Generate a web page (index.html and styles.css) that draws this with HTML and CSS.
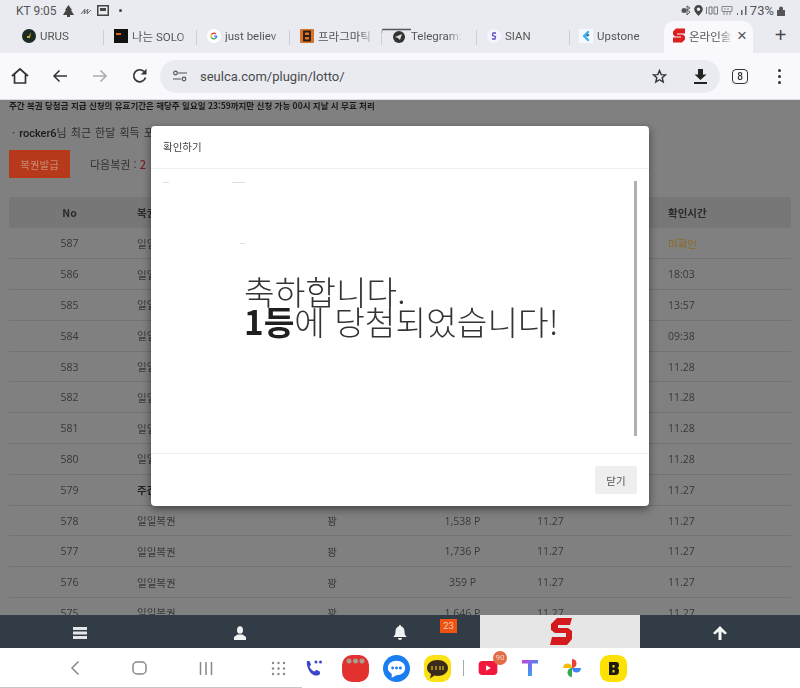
FILE: index.html
```html
<!DOCTYPE html>
<html lang="ko">
<head>
<meta charset="utf-8">
<title>온라인 복권</title>
<link rel="stylesheet" href="styles.css">
</head>
<body>
<div class="screen">
  <header class="chrome">
    <div class="status">
      <div class="status-left">
        <span>KT 9:05</span>
        <svg width="13" height="12" viewBox="0 0 13 12"><path d="M6.500 0 10 5H9l3 5H8v2H5v-2H1l3-5H3z" fill="#444"/></svg>
        <svg width="12" height="10" viewBox="0 0 12 10"><path d="M1 8 5 3 4 8l4-5-1 5 4-4" fill="none" stroke="#666" stroke-width="1"/></svg>
        <svg width="12" height="11" viewBox="0 0 12 11"><path fill-rule="evenodd" d="M0 0h12v11H0zM1.500 1.500v8h9v-8zM3 3h6v3H3z" fill="#444"/></svg>
        <span class="status-dot"></span>
      </div>
      <div class="status-right">
        <svg width="10" height="11" viewBox="0 0 10 11"><circle cx="3" cy="5.500" r="2.500" fill="#555"/><path d="M6 1v9l3-3-3-2 3-2z" fill="none" stroke="#555"/></svg>
        <svg width="9" height="11" viewBox="0 0 9 11"><path fill-rule="evenodd" d="M4.500 0a4.300 4.300 0 0 1 4.300 4.300C8.800 7 4.500 11 4.500 11S.2 7 .2 4.300A4.300 4.300 0 0 1 4.500 0zm0 2.500a1.800 1.800 0 1 0 0 3.600 1.800 1.800 0 0 0 0-3.600z" fill="#444"/></svg>
        <svg width="12" height="9" viewBox="0 0 12 9"><path d="M.5 1v7M3 1v7h3V1zM8 1v7h3.500V1z" fill="none" stroke="#777"/></svg>
        <svg width="12" height="10" viewBox="0 0 12 10"><path d="M1 .5h10v5H1zM3 6v3M6 6v3M9 6v3M4 2v2M7 2v2" fill="none" stroke="#888"/></svg>
        <svg width="11" height="9" viewBox="0 0 11 9"><path d="M1 7v2h1V7zM5 4v5h1.500V4zM9 0v9h1.500V0z" fill="#666"/></svg>
        <span>73%</span>
        <svg width="8" height="10" viewBox="0 0 8 10"><path d="M2 4V2.500a2 2 0 0 1 4 0V4h2v6H0V4z" fill="#555"/></svg>
      </div>
    </div>
    <nav class="tabs">
      <div class="tab tab-a"><svg class="fav" viewBox="0 0 14 14"><circle cx="7" cy="7" r="7" fill="#1d2a22"/><path d="M9 3 7 7H5v2h3z" fill="#b6b02c"/></svg><span class="tab-text">URUS</span></div>
      <div class="tab tab-b"><svg class="fav" viewBox="0 0 14 14"><rect width="14" height="14" fill="#111"/><rect x="2" y="4" width="5" height="2" fill="#d8661c"/></svg><span class="tab-text">나는 SOLO</span></div>
      <div class="tab tab-c"><svg class="fav" viewBox="0 0 14 14"><circle cx="7" cy="7" r="7" fill="#fff"/><path d="M7 3.500a3.500 3.500 0 0 1 2.400 1L8.300 5.600A2 2 0 0 0 5 6L3.800 5.300A3.500 3.500 0 0 1 7 3.500z" fill="#e94235"/><path d="M3.800 5.300 5 6a2 2 0 0 0 0 2l-1.200.8a3.500 3.500 0 0 1 0-3.500z" fill="#f9bb05"/><path d="M5 8a2 2 0 0 0 3 .7l1.200.9A3.500 3.500 0 0 1 3.800 8.800z" fill="#34a853"/><path d="M7 6.400h3.400a3.500 3.500 0 0 1-1.200 3.200L8 8.700a1.500 1.500 0 0 0 .6-.9H7z" fill="#4285f4"/></svg><span class="tab-text">just believ</span></div>
      <div class="tab tab-d"><svg class="fav" viewBox="0 0 14 14"><rect width="14" height="14" rx="1" fill="#d9732a"/><path d="M4 2.500h6v9H4zM4 7h6" fill="none" stroke="#2b1c10" stroke-width="1.800"/></svg><span class="tab-text">프라그마틱</span></div>
      <div class="tab tab-e"><svg class="fav-tg" width="29" height="16" viewBox="0 0 29 16"><path d="M0 1.500h29" stroke="#555" stroke-width="1.500"/><path d="M0 1v4" stroke="#999"/><circle cx="17" cy="9" r="6" fill="#333"/><path d="M13 9l7-3-2 6-2-2z" fill="#ddd"/></svg><span class="tab-text">Telegram:</span></div>
      <div class="tab tab-f"><svg class="fav" viewBox="0 0 14 14"><circle cx="7" cy="7" r="7" fill="#f4f3ff"/><path d="M9 4H6L5.500 6.500 8.500 7.500 8 10H5" fill="none" stroke="#5a52c4" stroke-width="1.300"/></svg><span class="tab-text">SIAN</span></div>
      <div class="tab tab-g"><svg class="fav" viewBox="0 0 14 14"><rect width="14" height="14" fill="#f4fafd"/><path d="M9 1.500 3.500 7 9 12.500 10.500 11 6.500 7 10.500 3z" fill="#3aaee8"/><path d="M6.500 7 9 4.500 10.500 6 9 7.500z" fill="#1c6fa8"/></svg><span class="tab-text">Upstone</span></div>
      <div class="tab active"><svg class="fav fav-s" viewBox="0 0 14 14"><path d="M13 0H4L1 3v3l2 2h6v1H1v5h9l3-3V8l-2-2H5V5h8z" fill="#dc1f1f"/></svg><span class="tab-text">온라인술</span><span class="close">×</span></div>
      <div class="new-tab">+</div>
    </nav>
    <div class="toolbar">
      <button class="tool" aria-label="home"><svg width="18" height="18" viewBox="0 0 18 18"><path d="M1 9 9 2l8 7M3.500 7.500V16h11V7.500" fill="none" stroke="#333" stroke-width="1.700"/></svg></button>
      <button class="tool" aria-label="back"><svg width="16" height="14" viewBox="0 0 16 14"><path d="M15 7H2M7.500 1.500 2 7l5.500 5.500" fill="none" stroke="#333" stroke-width="1.500"/></svg></button>
      <button class="tool" aria-label="forward"><svg width="16" height="14" viewBox="0 0 16 14"><path d="M1 7h13M8.500 1.500 14 7l-5.500 5.500" fill="none" stroke="#aaa" stroke-width="1.500"/></svg></button>
      <button class="tool" aria-label="reload"><svg width="16" height="16" viewBox="0 0 16 16"><path d="M13.500 9.500A6 6 0 1 1 12 3.500" fill="none" stroke="#333" stroke-width="1.700"/><path d="M14.500 0.800V6.500H8.800z" fill="#333"/></svg></button>
      <div class="omni">
        <svg width="14" height="12" viewBox="0 0 14 12"><g fill="none" stroke="#555" stroke-width="1.200"><path d="M5 3h9M0 9h8"/><circle cx="2.500" cy="3" r="1.800"/><circle cx="11" cy="9" r="1.800"/></g></svg>
        <span class="url">seulca.com/plugin/lotto/</span>
        <svg class="star" width="15" height="15" viewBox="0 0 15 15"><path d="M7.500 1.500 9.200 5.600l4.300.3-3.300 2.800 1 4.300-3.700-2.300-3.700 2.300 1-4.300L1.500 5.900l4.300-.3z" fill="none" stroke="#333" stroke-width="1.400"/></svg>
        <svg class="dl" width="13" height="15" viewBox="0 0 13 15"><path d="M4 0h5v5.500h3.500L6.500 11 .5 5.500H4zM0 13h13v2H0z" fill="#222"/></svg>
      </div>
      <div class="tab-count">8</div>
      <div class="menu"><i></i><i></i><i></i></div>
    </div>
  </header>

  <main class="page">
    <p class="notice">주간 복권 당첨금 지급 신청의 유효기간은 해당주 일요일 23:59까지만 신청 가능 00시 지날 시 무효 처리</p>
    <p class="points">· <b>rocker6</b>님 최근 한달 획득 포인트</p>
    <div class="issue-row">
      <span class="issue">복권발급</span>
      <span class="next">다음복권 : <em>2</em></span>
    </div>
    <table class="lotto">
      <thead>
        <tr><th class="c-no">No</th><th class="c-name">복권</th><th class="c-res">결과</th><th class="c-pt">포인트</th><th class="c-date">구매</th><th class="c-time">확인시간</th></tr>
      </thead>
      <tbody>
        <tr><td>587</td><td class="left">일일복권</td><td>꽝</td><td>0 P</td><td class="left">11.29</td><td class="left unread">미확인</td></tr>
        <tr><td>586</td><td class="left">일일복권</td><td>꽝</td><td>0 P</td><td class="left">11.29</td><td class="left">18:03</td></tr>
        <tr><td>585</td><td class="left">일일복권</td><td>꽝</td><td>0 P</td><td class="left">11.29</td><td class="left">13:57</td></tr>
        <tr><td>584</td><td class="left">일일복권</td><td>꽝</td><td>0 P</td><td class="left">11.29</td><td class="left">09:38</td></tr>
        <tr><td>583</td><td class="left">일일복권</td><td>꽝</td><td>0 P</td><td class="left">11.28</td><td class="left">11.28</td></tr>
        <tr><td>582</td><td class="left">일일복권</td><td>꽝</td><td>0 P</td><td class="left">11.28</td><td class="left">11.28</td></tr>
        <tr><td>581</td><td class="left">일일복권</td><td>꽝</td><td>0 P</td><td class="left">11.28</td><td class="left">11.28</td></tr>
        <tr><td>580</td><td class="left">일일복권</td><td>꽝</td><td>0 P</td><td class="left">11.28</td><td class="left">11.28</td></tr>
        <tr><td>579</td><td class="left"><b>주간복권</b></td><td>꽝</td><td>0 P</td><td class="left">11.27</td><td class="left">11.27</td></tr>
        <tr><td>578</td><td class="left">일일복권</td><td>꽝</td><td>1,538 P</td><td class="left">11.27</td><td class="left">11.27</td></tr>
        <tr><td>577</td><td class="left">일일복권</td><td>꽝</td><td>1,736 P</td><td class="left">11.27</td><td class="left">11.27</td></tr>
        <tr><td>576</td><td class="left">일일복권</td><td>꽝</td><td>359 P</td><td class="left">11.27</td><td class="left">11.27</td></tr>
        <tr><td>575</td><td class="left">일일복권</td><td>꽝</td><td>1,646 P</td><td class="left">11.27</td><td class="left">11.27</td></tr>
      </tbody>
    </table>

    <div class="modal" role="dialog">
      <div class="modal-head">확인하기</div>
      <div class="modal-body">
        <span class="speck speck-a"></span><span class="speck speck-b"></span><span class="speck speck-c"></span>
        <div class="modal-text">
          <div>축하합니다.</div>
          <div><b>1등</b>에 당첨되었습니다!</div>
        </div>
        <div class="scrollbar"></div>
      </div>
      <div class="modal-foot"><button class="close-btn">닫기</button></div>
    </div>
  </main>

  <nav class="sitebar">
    <div class="cell"><svg width="14" height="12" viewBox="0 0 14 12"><path d="M0 0h14v3H0zM0 4.500h14v3H0zM0 9h14v3H0z" fill="#e6e6e6"/></svg></div>
    <div class="cell"><svg width="12" height="14" viewBox="0 0 12 14"><ellipse cx="6" cy="4" rx="3" ry="3.800" fill="#f2f2f2"/><path d="M0 14v-3l3.500-2.500h5L12 11v3z" fill="#f2f2f2"/></svg></div>
    <div class="cell"><span class="bell-wrap"><svg width="14" height="15" viewBox="0 0 14 15"><path d="M7 0a1 1 0 0 1 1 1.200C10.500 2 11.500 4 11.500 6.500c0 3 1 4.500 2.500 5.500H0c1.500-1 2.500-2.500 2.500-5.500C2.500 4 3.500 2 6 1.200A1 1 0 0 1 7 0zM5 13h4a2 2 0 0 1-4 0z" fill="#f2f2f2"/></svg><span class="badge">23</span></span></div>
    <div class="cell cell-logo"><svg width="25" height="29" viewBox="0 0 25 29"><path d="M24 1H9L3 7v6l4 3h11v4H4l-2 8h17l5-6v-8l-4-3H10V8h12z" fill="#d41a1c"/></svg></div>
    <div class="cell"><svg width="14" height="14" viewBox="0 0 14 14"><path d="M7 0l7 7-2 1.500-3.500-3V14h-3V5.500L2 8.500 0 7z" fill="#f5f5f5"/></svg></div>
  </nav>

  <footer class="android">
    <div class="sys-buttons">
      <svg width="10" height="16" viewBox="0 0 10 16"><path d="M8.500 1.500 2 8l6.500 6.500" fill="none" stroke="#888" stroke-width="1.500"/></svg>
      <svg width="15" height="14" viewBox="0 0 15 14"><rect x="1" y="1" width="13" height="12" rx="4" fill="none" stroke="#888" stroke-width="1.500"/></svg>
      <svg width="14" height="13" viewBox="0 0 14 13"><path d="M1.500 0v13M7 0v13M12.500 0v13" stroke="#888" stroke-width="1.500"/></svg>
    </div>
    <div class="dock">
      <svg width="15" height="15" viewBox="0 0 15 15"><g fill="#888"><circle cx="2" cy="2" r="1.200"/><circle cx="7.500" cy="2" r="1.200"/><circle cx="13" cy="2" r="1.200"/><circle cx="2" cy="7.500" r="1.200"/><circle cx="7.500" cy="7.500" r="1.200"/><circle cx="13" cy="7.500" r="1.200"/><circle cx="2" cy="13" r="1.200"/><circle cx="7.500" cy="13" r="1.200"/><circle cx="13" cy="13" r="1.200"/></g></svg>
      <svg class="ic-phone" width="18" height="18" viewBox="0 0 18 18"><path d="M2 2c3 0 3 0 4 4L4.500 7.500c1 2.500 2.500 4 5 5L11 11c4 1 4 1 4 4-2 2-5 2-8 0S1 6 2 2z" fill="#3d45c8"/><circle cx="11" cy="3" r="1.500" fill="#3d45c8"/><circle cx="15.500" cy="3" r="1.500" fill="#3d45c8"/></svg>
      <svg class="ic-red" width="27" height="27" viewBox="0 0 27 27"><rect width="27" height="27" rx="10" fill="#e2312f"/><g fill="#a8a08c"><circle cx="7" cy="6" r="2.500"/><circle cx="13.500" cy="6" r="2.500"/><circle cx="20" cy="6" r="2.500"/></g></svg>
      <svg class="ic-msg" width="27" height="27" viewBox="0 0 28 28"><circle cx="14" cy="14" r="14" fill="#1a7df0"/><path d="M14 6c5 0 9 3 9 7.500S19 21 14 21l-5 2.500V19.500C6.500 18 5 16 5 13.500 5 9 9 6 14 6z" fill="#fff"/><g fill="#1a7df0"><circle cx="10" cy="13.500" r="1.500"/><circle cx="14" cy="13.500" r="1.500"/><circle cx="18" cy="13.500" r="1.500"/></g></svg>
      <svg class="ic-talk" width="27" height="27" viewBox="0 0 27 27"><rect width="27" height="27" rx="9" fill="#fbe216"/><path d="M13.500 5C19.500 5 24 8.500 24 13s-4.500 8-10.500 8c-1 0-2-.1-3-.4L6 23.500l1-4.500C4.500 17.500 3 15.500 3 13 3 8.500 7.500 5 13.500 5z" fill="#3a2a1c"/><path d="M8 11v4M12 11v4M16 11v4M19 11v4" stroke="#fbe216" stroke-width="1"/></svg>
      <span class="dock-sep"></span>
      <span class="yt"><svg width="20" height="14" viewBox="0 0 20 15"><rect width="20" height="15" rx="4" fill="#f0193c"/><path d="M8 4.500v6l5-3z" fill="#fff"/></svg><span class="yt-badge">90</span></span>
      <svg class="ic-t" width="18" height="18" viewBox="0 0 18 18"><defs><linearGradient id="tg" x1="0" y1="0" x2="1" y2="1"><stop offset="0" stop-color="#d23fe0"/><stop offset=".5" stop-color="#5a7df0"/><stop offset="1" stop-color="#2ec4e8"/></linearGradient></defs><path d="M1 1h16v3.500h-6V17H7V4.500H1z" fill="url(#tg)"/></svg>
      <svg class="ic-photos" width="20" height="20" viewBox="0 0 20 20"><path d="M10 10V1a4.500 4.500 0 0 1 0 9z" fill="#e94235"/><path d="M10 10h9a4.500 4.500 0 0 1-9 0z" fill="#4285f4"/><path d="M10 10v9a4.500 4.500 0 0 1 0-9z" fill="#34a853"/><path d="M10 10H1a4.500 4.500 0 0 1 9 0z" fill="#f9bb05"/></svg>
      <svg class="ic-b" width="27" height="27" viewBox="0 0 27 27"><rect width="27" height="27" rx="9" fill="#fde100"/><path d="M9 7h7c2 0 3 1 3 3 0 1.500-.5 2.500-1.500 3 1 .5 1.500 1.500 1.500 3 0 2.500-1 4-3.500 4H9zM12.500 10v2.500h2V10zM12.500 15v2.500h2V15z" fill="#1b1b10" fill-rule="evenodd"/></svg>
    </div>
  </footer>
</div>
</body>
</html>
```
FILE: styles.css
```css
* { box-sizing: border-box; }
html, body { margin: 0; padding: 0; height: 100%; overflow: hidden; }
body { font-family: "Noto Sans CJK KR", "Noto Sans", sans-serif; background: #fff; }
.screen { width: 800px; height: 688px; display: flex; flex-direction: column; filter: blur(.5px); }

.chrome { flex: none; height: 100px; display: flex; flex-direction: column; background: #e9ebf1; }
.status { height: 21px; display: flex; justify-content: space-between; align-items: center; padding: 0 15px 0 16px; font-size: 12px; color: #555; font-family: "Roboto", sans-serif; }
.status-left, .status-right { display: flex; align-items: center; gap: 5px; }
.status-right { gap: 3px; font-size: 13px; }
.status-dot { width: 3px; height: 3px; border-radius: 50%; background: #444; margin-left: 5px; }

.tabs { height: 32px; display: flex; align-items: center; font-size: 11.500px; color: #555; font-family: "Roboto", "Noto Sans CJK KR", sans-serif; }
.tab { height: 100%; display: flex; align-items: center; gap: 4px; padding-bottom: 3px; overflow: hidden; white-space: nowrap; }
.tab-text { display: block; flex: 1; overflow: hidden; -webkit-mask-image: linear-gradient(to right, #000 70%, transparent); mask-image: linear-gradient(to right, #000 70%, transparent); }
.fav { width: 14px; height: 14px; flex: none; }
.fav-tg { flex: none; }
.tab-a { width: 104px; padding-left: 22px; }
.tab-b { width: 93px; padding-left: 10px; }
.tab-c { width: 93px; padding-left: 10px; }
.tab-d { width: 92px; padding: 0 6px 3px 10px; }
.tab-e { width: 95px; padding: 0 14px 3px 0; gap: 0; }
.tab-f { width: 93px; padding-left: 10px; }
.tab-g { width: 94px; padding-left: 9px; }
.tab-a, .tab-b, .tab-c, .tab-d, .tab-e, .tab-f { background: linear-gradient(#c9ced8, #c9ced8) right 9px / 1px 15px no-repeat; }
.tab.active { width: 89px; height: 32px; background: #f8f8fd; border-radius: 10px 10px 0 0; padding: 0 6px 3px 8px; gap: 3px; }
.fav-s { width: 14px; height: 15px; }
.close { font-size: 17px; color: #555; line-height: 1; margin-left: 1px; font-family: "Liberation Sans", sans-serif; }
.new-tab { flex: 1; text-align: center; font-size: 20px; color: #444; line-height: 1; padding: 0 0 4px 8px; font-family: "Liberation Sans", sans-serif; }

.toolbar { flex: 1; background: #f8f8fd; display: flex; align-items: center; border-bottom: 1px solid #ddd; }
.tool { width: 40px; height: 34px; border: 0; background: none; padding: 0; display: flex; align-items: center; justify-content: center; }
.omni { flex: none; width: 560px; height: 33px; background: #e9ebf1; border-radius: 17px; display: flex; align-items: center; padding: 0 13px; color: #444; }
.url { margin-left: 13px; font-size: 13px; font-family: "Roboto", sans-serif; color: #4a4a4a; }
.star { margin-left: auto; }
.dl { margin-left: 27px; }
.tab-count { width: 16px; height: 15px; margin-left: 12px; border: 1.500px solid #333; border-radius: 4px; font-size: 10px; font-weight: 500; font-family: "Roboto", sans-serif; display: flex; align-items: center; justify-content: center; color: #333; }
.menu { margin-left: 30px; display: flex; flex-direction: column; gap: 3px; }
.menu i { display: block; width: 3px; height: 3px; background: #333; border-radius: 50%; }

.page { flex: 1; position: relative; background: #808080; overflow: hidden; color: #333; padding: 0 9px; min-height: 0; }
.notice { margin: 0; font-size: 8.500px; font-weight: 700; line-height: 10px; color: #1a1a1a; white-space: nowrap; }
.points { margin: 15px 0 0; font-size: 11px; line-height: 14px; color: #2e2e2e; padding-left: 3px; word-spacing: 1px; }
.points b { font-weight: 500; color: #1a1a1a; font-family: "Roboto", "Noto Sans CJK KR", sans-serif; }
.issue-row { display: flex; align-items: center; margin-top: 9px; height: 28px; }
.issue { width: 61px; height: 28px; background: #b5391a; color: #c98b70; font-size: 10.500px; display: flex; align-items: center; justify-content: center; }
.next { margin-left: 20px; font-size: 11px; color: #333; }
.next em { font-style: normal; color: #7c1a1a; font-weight: 500; }

.lotto { width: 782px; margin-top: 19px; border-collapse: collapse; table-layout: fixed; font-size: 10.500px; color: #333; }
.lotto th { height: 31px; background: #777777; font-weight: 700; color: #2a2a2a; font-size: 10.500px; padding: 0; }
.lotto td { height: 30.800px; padding: 0; text-align: center; border-bottom: 1px solid #737373; font-family: "Open Sans", "Noto Sans CJK KR", sans-serif; color: #383838; }
.lotto td.left { text-align: left; padding-left: 7px; }
.lotto th.c-name, .lotto th.c-date, .lotto th.c-time { text-align: left; padding-left: 7px; }
.lotto td b { font-weight: 700; color: #222; }
.c-no { width: 121px; }
.c-name { width: 139px; }
.c-res { width: 126px; }
.c-pt { width: 135px; }
.c-date { width: 131px; }
.c-time { width: 130px; }
.lotto td.unread { color: #8c6a20; }

.modal { position: absolute; left: 151px; top: 26px; width: 498px; height: 380px; background: #fff; border-radius: 4px; box-shadow: 0 3px 9px rgba(0,0,0,.5); display: flex; flex-direction: column; }
.modal-head { height: 42.500px; flex: none; padding: 0 12px; display: flex; align-items: center; font-size: 10.500px; color: #444; border-bottom: 1px solid #eceeef; }
.modal-body { flex: 1; position: relative; min-height: 0; padding: 107px 0 0 93px; }
.modal-text { font-size: 33.300px; line-height: 30px; color: #333; font-weight: 300; white-space: nowrap; }
.modal-text b { font-weight: 700; color: #1f1f1f; }
.speck { position: absolute; height: 1px; background: #e0e0e0; }
.speck-a { left: 12px; top: 13px; width: 6px; }
.speck-b { left: 81px; top: 13px; width: 13px; }
.speck-c { left: 89px; top: 74px; width: 5px; }
.scrollbar { position: absolute; right: 12px; top: 12px; width: 3px; height: 255px; background: #b0b0b0; }
.modal-foot { height: 53px; flex: none; border-top: 1px solid #eceeef; display: flex; justify-content: flex-end; align-items: center; padding: 0 12px 0 0; }
.close-btn { width: 42px; height: 28px; border: 0; border-radius: 2px; background: #eeeeee; color: #555; font-size: 10.500px; font-family: "Noto Sans CJK KR", sans-serif; padding: 0; }

.sitebar { flex: none; height: 33px; background: #323c47; display: grid; grid-template-columns: repeat(5, 160px); }
.cell { display: flex; align-items: center; justify-content: center; padding-top: 2px; }
.cell-logo { background: #e6e6e6; padding: 0; }
.bell-wrap { position: relative; display: flex; }
.badge { position: absolute; left: 47px; top: -6px; width: 17px; height: 14px; background: #ef5313; color: #f6c6a8; font-size: 9.500px; line-height: 14px; text-align: center; font-family: "Roboto", sans-serif; }

.android { flex: none; height: 40px; background: linear-gradient(#c8c8c8, #c8c8c8) left bottom / 302px 1px no-repeat #fff; display: flex; align-items: center; padding-left: 70px; }
.sys-buttons { display: flex; align-items: center; gap: 52px; }
.dock { margin-left: 58px; display: flex; align-items: center; }
.ic-phone { margin-left: 19px; }
.ic-red { margin-left: 19px; }
.ic-msg { margin-left: 14px; }
.ic-talk { margin-left: 14px; }
.dock-sep { width: 1px; height: 16px; background: #aaa; margin: 0 14px 0 12px; }
.yt { position: relative; display: flex; }
.yt-badge { position: absolute; left: 15px; top: -10px; width: 14px; height: 14px; border-radius: 50%; background: #e56b46; color: #f5d5c5; font-size: 8px; line-height: 14px; text-align: center; font-family: "Roboto", sans-serif; }
.ic-t { margin-left: 23px; }
.ic-photos { margin-left: 23px; }
.ic-b { margin-left: 18px; }
```
